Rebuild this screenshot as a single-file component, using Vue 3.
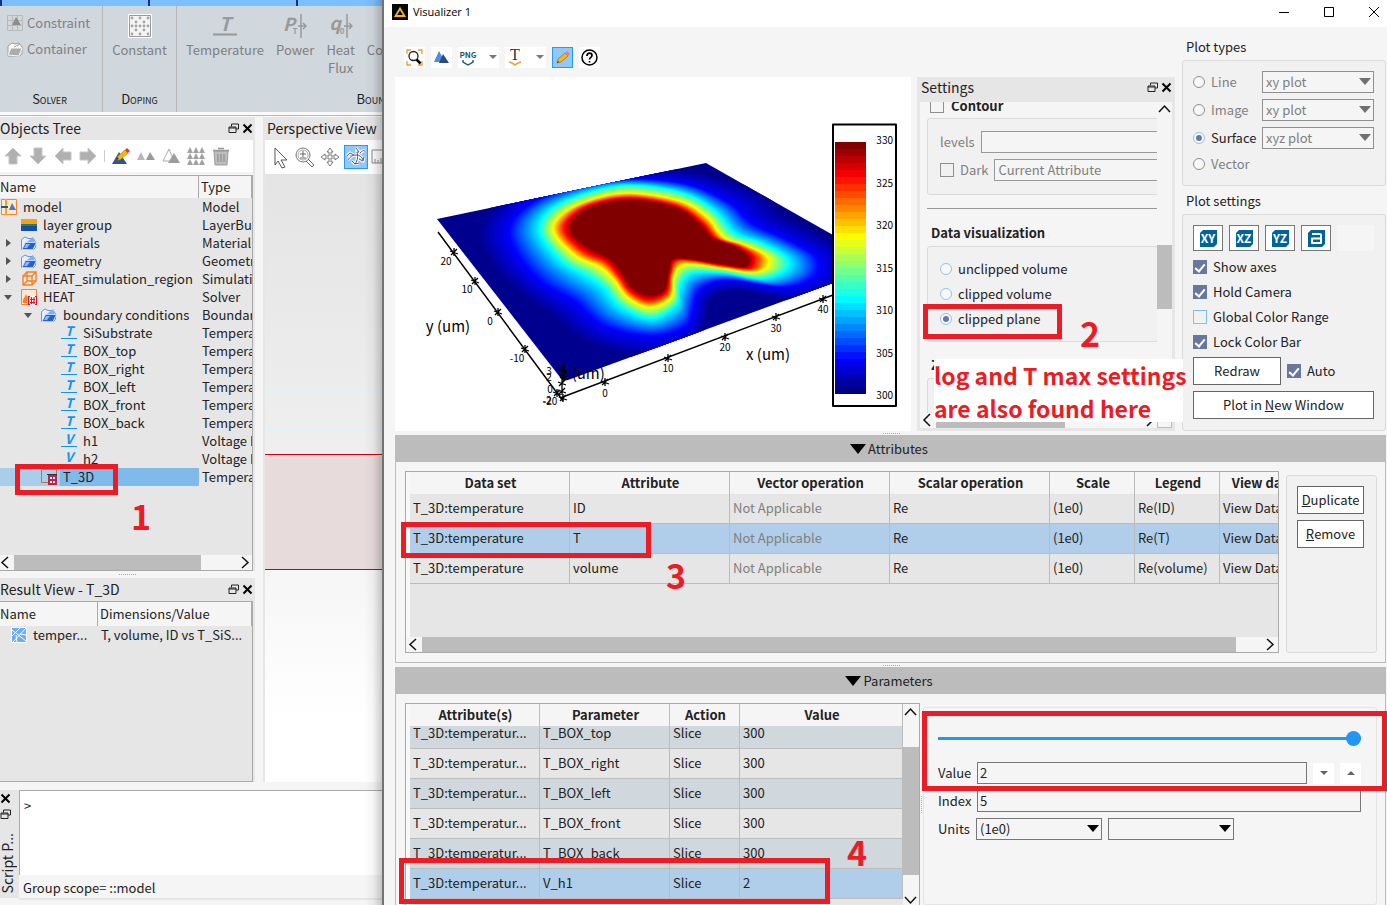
<template>
  <div class="desktop">
    <!-- simulation project window -->
    <section class="project">
      <div class="tabs"><i></i><i></i><i></i></div>
      <div class="ribbon">
        <div class="ribbon-group solver">
          <button class="small-tool">
            <svg width="16" height="16" viewBox="0 0 16 16">
              <path d="M.5.5h15v15H.5zM5.500 0v16M10.500 0v16M0 5.500h16M0 10.500h16" fill="none" stroke="#b9b9b9" />
              <path d="M9 2l5 8H5z" fill="#8c8c8c" />
            </svg>
            Constraint
          </button>
          <button class="small-tool">
            <svg width="16" height="16" viewBox="0 0 16 16">
              <path d="M1 5l4-3 3 1 4-1 3 4v7l-3 2H1z" fill="#f8f8f8" stroke="#9c9c9c" />
              <path d="M1 14l3-7h11l-3 8z" fill="#acacac" stroke="#f4f4f4" />
              <path d="M7 6l6-3" stroke="#a0a0a0" />
            </svg>
            Container
          </button>
          <span class="group-name">Solver</span>
        </div>
        <div class="ribbon-group doping">
          <button class="big-tool">
            <svg width="24" height="24" viewBox="0 0 24 24">
              <path d="M.5.5h23v23H.5z" fill="#f4f4f4" stroke="#fff" />
              <path d="M1.500 1.500h21v21h-21z" fill="none" stroke="#999" />
              <circle v-for="d in dopingDots" :key="d.id" :cx="d.x" :cy="d.y" r="1.400" fill="#a5a5a5" />
            </svg>
            Constant
          </button>
          <span class="group-name">Doping</span>
        </div>
        <div class="ribbon-group boundary">
          <div class="boundary-tools">
            <button class="big-tool temperature">
              <svg width="24" height="24" viewBox="0 0 24 24">
                <text x="12" y="17" class="glyph" font-size="19">T</text>
                <path d="M0 20.500h24" stroke="#999" stroke-width="2" />
              </svg>
              Temperature
            </button>
            <button class="big-tool">
              <svg width="24" height="24" viewBox="0 0 24 24">
                <text x="6" y="17" class="glyph" font-size="18">P</text>
                <text x="12" y="20" class="glyph-sub" font-size="8">T</text>
                <path d="M18 0v24M15 12h8M20 9l3 3-3 3" fill="none" stroke="#999" stroke-width="1.500" />
              </svg>
              Power
            </button>
            <button class="big-tool">
              <svg width="24" height="24" viewBox="0 0 24 24">
                <text x="6" y="16" class="glyph" font-size="18">q</text>
                <text x="13" y="20" class="glyph-sub" font-size="8">0</text>
                <path d="M18 0v24M15 12h8M20 9l3 3-3 3" fill="none" stroke="#999" stroke-width="1.500" />
              </svg>
              Heat<br />Flux
            </button>
            <button class="big-tool convection">Convection</button>
          </div>
          <span class="group-name">Boundary Conditions</span>
        </div>
      </div>
      <div class="ribbon-line"></div>

      <div class="workspace">
        <div class="docks">
          <div class="dock tree-dock">
            <header class="dock-title">
              <h2>Objects Tree</h2>
              <button class="dock-btn" aria-label="Float">
                <svg width="11" height="11" viewBox="0 0 11 11"><path d="M3.500 3.500V1h7v5H8M1 4h7v5.500H1zM1 5h7" fill="none" stroke="#222" /></svg>
              </button>
              <button class="dock-btn" aria-label="Close">
                <svg width="11" height="11" viewBox="0 0 11 11"><path d="M1.500 1.500l8 8M9.500 1.500l-8 8" stroke="#000" stroke-width="2" /></svg>
              </button>
            </header>
            <div class="tree-tools">
              <button v-for="r in [0, 180, 270, 90]" :key="r" aria-label="Move">
                <svg width="18" height="18" viewBox="0 0 18 18">
                  <path :transform="`rotate(${r} 9 9)`" d="M9 1l8 8h-4v8H5V9H1z" fill="#b0b0b0" stroke="#c6c6c6" />
                </svg>
              </button>
              <i class="tool-sep"></i>
              <button aria-label="Edit">
                <svg width="18" height="18" viewBox="0 0 18 18">
                  <path d="M7 5l8 12H0z" fill="#2d5596" />
                  <path d="M4 13l2-4 7-6 3 3-8 7z" fill="#f5b800" stroke="#a87800" stroke-width=".6" />
                  <path d="M13 3l2-2 3 3-2 2z" fill="#d6364a" />
                  <path d="M4 13l1-3 2 2z" fill="#333" />
                </svg>
              </button>
              <button aria-label="Pair">
                <svg width="18" height="18" viewBox="0 0 18 18"><path d="M0 13l4-8 4 8z" fill="#b8b8b8" /><path d="M9 13l4-8 5 8z" fill="#999" /></svg>
              </button>
              <button aria-label="Mirror">
                <svg width="18" height="18" viewBox="0 0 18 18"><path d="M1 14L7 2l5 12z" fill="#fff" stroke="#aaa" /><path d="M6 16l6-10 6 10z" fill="#9d9d9d" /></svg>
              </button>
              <button aria-label="Array">
                <svg width="18" height="18" viewBox="0 0 18 18">
                  <path v-for="n in 9" :key="n" :transform="`translate(${((n - 1) % 3) * 6} ${Math.floor((n - 1) / 3) * 6})`" d="M0 6l3-6 3 6z" fill="#a2a2a2" />
                </svg>
              </button>
              <button aria-label="Delete">
                <svg width="18" height="20" viewBox="0 0 18 20">
                  <path d="M2 5h14l-1 14H3z" fill="#bdbdbd" stroke="#9d9d9d" />
                  <path d="M1 4.500h16M6 2.500h6M6 8v8M9 8v8M12 8v8" stroke="#999" stroke-width="1.500" />
                </svg>
              </button>
            </div>
            <div class="tree-frame">
              <table class="tree">
                <colgroup><col class="tree-name" /><col /></colgroup>
                <thead><tr><th>Name</th><th>Type</th></tr></thead>
                <tbody>
                  <tr v-for="node in nodes" :key="node.name" :class="{ selected: node.selected }">
                    <td>
                      <div class="node" :class="'depth-' + node.depth">
                        <i class="arrow" :class="node.arrow"></i>
                        <svg class="node-icon" width="16" height="16" viewBox="0 0 16 16">
                          <g v-if="node.icon === 'model'">
                            <path d="M.5.5h15v15H.5z" fill="#fbe9d7" stroke="#f08a2c" />
                            <path d="M5 0v16" stroke="#f6a21b" stroke-width="2" />
                            <path d="M0 8h7" stroke="#135c8d" stroke-width="2" />
                            <path d="M8 11l3-7 4 7z" fill="#5577b5" />
                          </g>
                          <g v-else-if="node.icon === 'layer'">
                            <path d="M0 2h16v6H0z" fill="#f6a313" /><path d="M0 7h16v2H0z" fill="#287b70" /><path d="M0 9h16v5H0z" fill="#154fa3" />
                          </g>
                          <g v-else-if="node.icon === 'folder'">
                            <path d="M.5 4.500L4 2l3 1.500h5l2.500 3v6L12 14.500H.5z" fill="#e4f0ff" stroke="#6a94d4" />
                            <path d="M1 14.500L4.500 7.500h11L12 14.500z" fill="#2461cc" stroke="#cfe2fb" stroke-width=".8" />
                            <path d="M6 7l6-5 2 4-1 1z" fill="#7db0f2" />
                            <path d="M3 13l2-4h4l-3 4z" fill="#8ab8f4" />
                          </g>
                          <path v-else-if="node.icon === 'region'" d="M2 5h9v9H2zM6 1h9v9H6zM2 5l4-4M11 5l4-4M11 14l4-4M2 14l4-4" fill="none" stroke="#f5821f" stroke-width="1.400" />
                          <g v-else-if="node.icon === 'heat'">
                            <path d="M.5.5h15v15H.5z" fill="#fbe9d7" stroke="#f08a2c" />
                            <path d="M2 14c-1-4 2-5 3-9 2 3 2 6 1 9z" fill="#f5821f" />
                            <path d="M7 7h9v9H7z" fill="#fff" />
                            <path d="M9 7.500H7.500v8H9M14 7.500h1.500v8H14M9 10.500h5M9 13.500h5M10.500 8v7M13 8v7" fill="none" stroke="#e3122a" stroke-width="1.200" />
                          </g>
                          <g v-else-if="node.icon === 'monitor'">
                            <path d="M.5.5h15v13H.5z" fill="none" stroke="#bb7650" />
                            <path d="M7 6h9v10H7z" fill="#b32650" /><path d="M9 8h2v2H9zM12 8h2v2h-2zM9 12h2v2H9zM12 12h2v2h-2z" fill="#fff" />
                            <path d="M6 5.500h10" stroke="#333" />
                          </g>
                          <g v-else>
                            <text x="8" y="11" class="bc-glyph">{{ node.icon }}</text>
                            <path d="M0 13.500h16" stroke="#0a95f5" />
                          </g>
                        </svg>
                        <span>{{ node.name }}</span>
                      </div>
                    </td>
                    <td>{{ node.type }}</td>
                  </tr>
                </tbody>
              </table>
              <div class="hscroll">
                <svg width="14" height="15" viewBox="0 0 14 15"><path d="M8 2L2 7.500 8 13" class="chev" /></svg>
                <i class="tree-thumb"></i><b></b>
                <svg width="14" height="15" viewBox="0 0 14 15"><path d="M4 2l6 5.500L4 13" class="chev" /></svg>
              </div>
            </div>
            <div class="mark mark-1"></div>
            <span class="step step-1">1</span>
          </div>
          <div class="grip"></div>
          <div class="dock result-dock">
            <header class="dock-title">
              <h2>Result View - T_3D</h2>
              <button class="dock-btn" aria-label="Float">
                <svg width="11" height="11" viewBox="0 0 11 11"><path d="M3.500 3.500V1h7v5H8M1 4h7v5.500H1zM1 5h7" fill="none" stroke="#222" /></svg>
              </button>
              <button class="dock-btn" aria-label="Close">
                <svg width="11" height="11" viewBox="0 0 11 11"><path d="M1.500 1.500l8 8M9.500 1.500l-8 8" stroke="#000" stroke-width="2" /></svg>
              </button>
            </header>
            <div class="tree-frame">
              <table class="tree results">
                <colgroup><col class="result-name" /><col /></colgroup>
                <thead><tr><th>Name</th><th>Dimensions/Value</th></tr></thead>
                <tbody>
                  <tr>
                    <td>
                      <div class="node result-node">
                        <svg class="node-icon" width="16" height="16" viewBox="0 0 16 16">
                          <path d="M.5.5h15v15H.5z" fill="#6cacf3" stroke="#fff" />
                          <path d="M1 3l14 11M15 1L2 15M1 9l8-8M5 8l1 7M9 7l6 1" stroke="#fff" />
                        </svg>
                        <span>temper...</span>
                      </div>
                    </td>
                    <td>T, volume, ID vs T_SiS...</td>
                  </tr>
                </tbody>
              </table>
            </div>
          </div>
        </div>

        <div class="perspective">
          <header class="dock-title"><h2>Perspective View</h2></header>
          <div class="view-tools">
            <button aria-label="Select">
              <svg width="24" height="24" viewBox="0 0 24 24"><path d="M7 3l12 12h-6l4 7-3 1-4-7-3 4z" fill="#fff" stroke="#555" /></svg>
            </button>
            <button aria-label="Zoom">
              <svg width="24" height="24" viewBox="0 0 24 24"><circle cx="10" cy="10" r="7" fill="none" stroke="#777" /><circle cx="10" cy="10" r="5" fill="none" stroke="#aaa" /><path d="M15 14l6 6-2 2-6-6M7 9h6M10 6v6M7 13h6" fill="none" stroke="#666" /></svg>
            </button>
            <button aria-label="Pan">
              <svg width="24" height="24" viewBox="0 0 24 24"><path d="M12 3l3 4h-2v4h4V9l4 3-4 3v-2h-4v4h2l-3 4-3-4h2v-4H7v2l-4-3 4-3v2h4V7H9z" fill="#fff" stroke="#777" /></svg>
            </button>
            <button class="on" aria-label="Rotate">
              <svg width="22" height="22" viewBox="0 0 22 22"><path :d="rotateArrows" fill="none" stroke="#fff" stroke-width="3" /><path :d="rotateArrows" fill="none" stroke="#557" /></svg>
            </button>
            <button aria-label="Ruler">
              <svg width="24" height="24" viewBox="0 0 24 24"><path d="M3 5h20v13H3zM6 18v-4M9 18v-3M12 18v-5M15 18v-3" fill="#fff" stroke="#888" /></svg>
            </button>
          </div>
          <div class="viewport"><i class="guide"></i><i class="guide"></i><div class="slab"></div></div>
        </div>
      </div>

      <div class="script">
        <div class="script-side">
          <svg width="11" height="11" viewBox="0 0 11 11"><path d="M1.500 1.500l8 8M9.500 1.500l-8 8" stroke="#000" stroke-width="2" /></svg>
          <svg width="11" height="11" viewBox="0 0 11 11"><path d="M3.500 3.500V1h7v5H8M1 4h7v5.500H1zM1 5h7" fill="none" stroke="#222" /></svg>
          <span>Script P...</span>
        </div>
        <div class="script-main">
          <div class="console">&gt;</div>
          <div class="scope">Group scope= ::model</div>
        </div>
      </div>
    </section>

    <!-- visualizer window -->
    <section class="visualizer">
      <header class="titlebar">
        <svg width="16" height="16" viewBox="0 0 16 16"><path d="M0 0h16v16H0z" fill="#000" /><path d="M8 4.500l4.500 7.500h-9z" fill="none" stroke="#fcb415" stroke-width="1.800" /></svg>
        <h1>Visualizer 1</h1>
        <button aria-label="Minimize"><svg width="12" height="12" viewBox="0 0 12 12"><path d="M1 6.500h10" stroke="#000" /></svg></button>
        <button aria-label="Maximize"><svg width="12" height="12" viewBox="0 0 12 12"><path d="M1.500 1.500h9v9h-9z" fill="none" stroke="#000" /></svg></button>
        <button aria-label="Close"><svg width="12" height="12" viewBox="0 0 12 12"><path d="M1 1l10 10M11 1L1 11" stroke="#000" /></svg></button>
      </header>

      <div class="upper">
        <div class="upper-left">
          <div class="plot-tools">
            <button aria-label="Zoom extent">
              <svg width="17" height="17" viewBox="0 0 17 17"><path d="M1 5V1h4M12 1h4v4M16 12v4h-4M5 16H1v-4" fill="none" stroke="#f09a36" stroke-width="1.300" /><circle cx="7.500" cy="7" r="4.500" fill="none" stroke="#222" stroke-width="1.300" /><path d="M10.500 10.500l4 4" stroke="#000" stroke-width="2.500" /></svg>
            </button>
            <button aria-label="Surface">
              <svg width="17" height="17" viewBox="0 0 17 17"><path d="M1 13L6 2l6 11z" fill="#4f8ee0" /><path d="M6 14l4-9 6 9z" fill="#2b4b7e" /></svg>
            </button>
            <button class="wide" aria-label="Export image">
              <svg width="17" height="17" viewBox="0 0 17 17"><text x="8" y="9" class="png-glyph">PNG</text><path d="M3 11v2l5 3 5-3v-2" fill="none" stroke="#14597c" stroke-width="1.400" /></svg>
              <i></i>
            </button>
            <button class="wide" aria-label="Export text">
              <svg width="17" height="17" viewBox="0 0 17 17"><text x="8" y="11" class="txt-glyph">T</text><path d="M2 13l3 1 3 2 3-2 3-1" fill="none" stroke="#f2a23a" stroke-width="1.600" /></svg>
              <i></i>
            </button>
            <button class="on" aria-label="Edit">
              <svg width="17" height="17" viewBox="0 0 17 17"><path d="M3 14l1-4 7-6 3 3-7 6z" fill="#f3b61f" stroke="#9b7413" stroke-width=".7" /><path d="M11 4l2-2 3 3-2 2z" fill="#f07a88" /><path d="M3 14l1-2 1 1z" fill="#222" /></svg>
            </button>
            <button aria-label="Help">
              <svg width="17" height="17" viewBox="0 0 17 17"><circle cx="8.500" cy="8.500" r="7.500" fill="none" stroke="#000" stroke-width="1.500" /><path d="M6 7c0-4 5-3.500 5-.500 0 2-2.500 1.800-2.500 4M8.500 12v1.500" fill="none" stroke="#000" stroke-width="1.700" /></svg>
            </button>
          </div>
          <div class="plot-row">
            <div class="plot">
              <svg width="516" height="354" viewBox="395 77 516 354">
                <clipPath id="plane"><path :d="planePath" /></clipPath>
                <path :d="planePath" fill="#00008f" />
                <g clip-path="url(#plane)">
                  <path v-for="c in contours" :key="c.level" :d="c.path" :fill="c.color" />
                </g>
                <path d="M438 232L563 401M560 398L833 295" fill="none" stroke="#000" stroke-width="1.500" />
                <path v-for="t in ticks" :key="t.id" :d="`M${t.x - 4} ${t.y - 1}l8 3M${t.x - 3} ${t.y + 3}l6-6M${t.x} ${t.y - 4}v8`" stroke="#000" stroke-width="1.300" />
                <text v-for="t in tickLabels" :key="t.id" :x="t.x" :y="t.y" class="tick">{{ t.text }}</text>
                <text x="448" y="332" class="axis">y (um)</text>
                <text x="768" y="360" class="axis">x (um)</text>
                <text x="583" y="379" class="axis">z (um)</text>
                <g class="color-bar">
                  <path d="M833 124.500h63V406h-63z" fill="#fff" stroke="#000" stroke-width="2" stroke-linejoin="round" />
                  <rect v-for="b in bands" :key="b.y" x="835" :y="b.y" width="31" height="7" :fill="b.color" />
                  <text v-for="(v, i) in barValues" :key="v" x="893" :y="144 + Math.round(i * 42.500)" class="bar-tick">{{ v }}</text>
                </g>
              </svg>
            </div>
            <div class="settings">
              <header class="dock-title">
                <h2>Settings</h2>
                <button class="dock-btn" aria-label="Float">
                  <svg width="11" height="11" viewBox="0 0 11 11"><path d="M3.500 3.500V1h7v5H8M1 4h7v5.500H1zM1 5h7" fill="none" stroke="#222" /></svg>
                </button>
                <button class="dock-btn" aria-label="Close">
                  <svg width="11" height="11" viewBox="0 0 11 11"><path d="M1.500 1.500l8 8M9.500 1.500l-8 8" stroke="#000" stroke-width="2" /></svg>
                </button>
              </header>
              <div class="settings-body">
                <div class="settings-scroll">
                  <label class="contour"><input v-model="contour" type="checkbox" />Contour</label>
                  <div class="box contour-box">
                    <label class="row">levels <input v-model="levels" type="text" /></label>
                    <div class="row">
                      <label><input v-model="dark" type="checkbox" />Dark</label>
                      <select aria-label="Contour attribute"><option>Current Attribute</option></select>
                    </div>
                  </div>
                  <hr />
                  <h3>Data visualization</h3>
                  <div class="box clip-box">
                    <label v-for="m in clipModes" :key="m"><input v-model="clipMode" type="radio" name="clip" :value="m" />{{ m }}</label>
                  </div>
                  <h3 class="z-title">Z</h3>
                  <div class="box rest-box"></div>
                </div>
                <div class="settings-v">
                  <svg width="15" height="12" viewBox="0 0 15 12"><path d="M2 10l5.500-6L13 10" class="chev" /></svg>
                  <i></i>
                </div>
                <div class="settings-h">
                  <svg width="14" height="15" viewBox="0 0 14 15"><path d="M10 1L4 7l6 6" class="chev" /></svg>
                  <i></i>
                  <svg width="14" height="15" viewBox="0 0 14 15"><path d="M4 1l6 6-6 6" class="chev" /></svg>
                </div>
                <div class="corner"></div>
              </div>
              <div class="mark mark-2"></div>
              <span class="step step-2">2</span>
              <p class="note">log and T max settings<br />are also found here</p>
            </div>
          </div>
        </div>

        <aside class="side">
          <h3>Plot types</h3>
          <div class="box types">
            <div v-for="p in plotTypes" :key="p.name" class="type-row" :class="{ off: !p.active }">
              <label><input v-model="plotType" type="radio" name="type" :value="p.name" :disabled="!p.active" />{{ p.name }}</label>
              <span v-if="p.kind" class="select"><select :aria-label="p.name + ' kind'"><option>{{ p.kind }}</option></select></span>
            </div>
          </div>
          <h3>Plot settings</h3>
          <div class="box plot-settings">
            <div class="planes">
              <button v-for="p in ['XY', 'XZ', 'YZ', 'a']" :key="p" :aria-label="p">
                <svg width="17" height="17" viewBox="0 0 17 17">
                  <path d="M3 0h14v14l-3 3H0V3z" fill="#00649a" />
                  <path v-if="p === 'a'" d="M4 4h8q1 0 1 1v8H4V8.500h9" fill="none" stroke="#fff" stroke-width="2" stroke-linejoin="round" />
                  <text v-else x="8" y="13" class="plane-glyph">{{ p }}</text>
                </svg>
              </button>
              <i></i>
            </div>
            <label v-for="o in options" :key="o.name" class="option"><input v-model="o.on" type="checkbox" />{{ o.name }}</label>
            <div class="redraw">
              <button class="btn">Redraw</button>
              <label><input v-model="auto" type="checkbox" />Auto</label>
            </div>
            <button class="btn">Plot in&nbsp;<u>N</u>ew Window</button>
          </div>
        </aside>
      </div>

      <div class="grip"></div>
      <button class="section-head"><i></i>Attributes</button>
      <div class="section attributes">
        <div class="attr-frame">
          <div class="attr-clip">
            <table class="grid">
              <colgroup><col v-for="(w, i) in ['w160', 'w160', 'w160', 'w160', 'w85', 'w85', 'w85']" :key="i" :class="w" /></colgroup>
              <thead><tr><th v-for="h in attributeHeads" :key="h">{{ h }}</th></tr></thead>
              <tbody>
                <tr v-for="a in attributes" :key="a" :class="{ selected: a === 'T' }">
                  <td>T_3D:temperature</td><td>{{ a }}</td><td class="na">Not Applicable</td><td>Re</td><td>(1e0)</td><td>Re({{ a }})</td><td>View Data</td>
                </tr>
              </tbody>
            </table>
          </div>
          <div class="hscroll">
            <svg width="16" height="15" viewBox="0 0 16 15"><path d="M10 2L4 7.500l6 5.500" class="chev" /></svg>
            <i class="attr-thumb"></i><b></b>
            <svg width="15" height="15" viewBox="0 0 15 15"><path d="M4 2l6 5.500L4 13" class="chev" /></svg>
          </div>
        </div>
        <div class="box attr-actions">
          <button class="btn"><u>D</u>uplicate</button>
          <button class="btn"><u>R</u>emove</button>
        </div>
        <div class="mark mark-3"></div>
        <span class="step step-3">3</span>
      </div>

      <div class="grip"></div>
      <button class="section-head"><i></i>Parameters</button>
      <div class="section parameters">
        <div class="param-frame">
          <div class="param-clip">
            <table class="grid">
              <colgroup><col class="w130" /><col class="w130" /><col class="w70" /><col /></colgroup>
              <thead><tr><th>Attribute(s)</th><th>Parameter</th><th>Action</th><th>Value</th></tr></thead>
              <tbody>
                <tr v-for="(p, i) in parameters" :key="p" :class="{ cut: i === 0, alt: i % 2 === 0, selected: p === 'V_h1' }">
                  <td>T_3D:temperatur...</td><td>{{ p }}</td><td>Slice</td><td>{{ p === 'V_h1' ? value : 300 }}</td>
                </tr>
              </tbody>
            </table>
          </div>
          <div class="vscroll">
            <svg width="15" height="16" viewBox="0 0 15 16"><path d="M2 11l5.500-6L13 11" class="chev" /></svg>
            <i></i>
            <svg width="15" height="12" viewBox="0 0 15 12"><path d="M2 4l5.500 6L13 4" class="chev" /></svg>
          </div>
        </div>
        <i class="vgrip"></i>
        <div class="box param-form">
          <input v-model="index" class="slider" type="range" min="0" max="5" aria-label="Slice position" />
          <div class="form-row">
            <label for="value">Value</label>
            <input id="value" v-model="value" type="text" />
            <button aria-label="Down"><i class="down"></i></button>
            <button aria-label="Up"><i class="up"></i></button>
          </div>
          <div class="form-row">
            <label for="index">Index</label>
            <input id="index" v-model="index" type="text" />
          </div>
          <div class="form-row units">
            <label for="units">Units</label>
            <span class="select"><select id="units"><option>(1e0)</option></select></span>
            <span class="select"><select aria-label="Unit name"><option></option></select></span>
          </div>
        </div>
        <div class="mark mark-4"></div>
        <span class="step step-4">4</span>
        <div class="mark mark-5"></div>
      </div>
    </section>
  </div>
</template>

<script setup>
import { ref } from 'vue'

const nodes = [
  { name: 'model', type: 'Model', depth: 0, icon: 'model' },
  { name: 'layer group', type: 'LayerBuilder', depth: 1, icon: 'layer' },
  { name: 'materials', type: 'Material', depth: 1, icon: 'folder', arrow: 'closed' },
  { name: 'geometry', type: 'Geometry', depth: 1, icon: 'folder', arrow: 'closed' },
  { name: 'HEAT_simulation_region', type: 'Simulation', depth: 1, icon: 'region', arrow: 'closed' },
  { name: 'HEAT', type: 'Solver', depth: 1, icon: 'heat', arrow: 'open' },
  { name: 'boundary conditions', type: 'Boundary', depth: 2, icon: 'folder', arrow: 'open' },
  { name: 'SiSubstrate', type: 'Temperature', depth: 3, icon: 'T' },
  { name: 'BOX_top', type: 'Temperature', depth: 3, icon: 'T' },
  { name: 'BOX_right', type: 'Temperature', depth: 3, icon: 'T' },
  { name: 'BOX_left', type: 'Temperature', depth: 3, icon: 'T' },
  { name: 'BOX_front', type: 'Temperature', depth: 3, icon: 'T' },
  { name: 'BOX_back', type: 'Temperature', depth: 3, icon: 'T' },
  { name: 'h1', type: 'Voltage BC', depth: 3, icon: 'V' },
  { name: 'h2', type: 'Voltage BC', depth: 3, icon: 'V' },
  { name: 'T_3D', type: 'Temperature', depth: 2, icon: 'monitor', selected: true }
]

const attributeHeads = ['Data set', 'Attribute', 'Vector operation', 'Scalar operation', 'Scale', 'Legend', 'View data']
const attributes = ['ID', 'T', 'volume']
const parameters = ['T_BOX_top', 'T_BOX_right', 'T_BOX_left', 'T_BOX_front', 'T_BOX_back', 'V_h1']

const contour = ref(false)
const dark = ref(false)
const levels = ref('')
const clipModes = ['unclipped volume', 'clipped volume', 'clipped plane']
const clipMode = ref('clipped plane')
const plotTypes = [
  { name: 'Line', kind: 'xy plot' },
  { name: 'Image', kind: 'xy plot' },
  { name: 'Surface', kind: 'xyz plot', active: true },
  { name: 'Vector' }
]
const plotType = ref('Surface')
const options = ref([
  { name: 'Show axes', on: true },
  { name: 'Hold Camera', on: true },
  { name: 'Global Color Range', on: false },
  { name: 'Lock Color Bar', on: true }
])
const auto = ref(true)
const value = ref('2')
const index = ref('5')

const rotateArrows = 'M11 2l3 4h-2c1 4 1 8-2 12M10 18l-3-3M10 18l4-1M11 9c4 0 6 2 7 5M19 11l-1 4-4-2M11 9C7 9 5 11 3 14M2 10l3-3 4 2M15 7c2-2 3-3 5-2'

const dopingDots = []
for (let r = 0; r < 5; r++) {
  for (let c = 0; c < 5; c++) {
    if ((r + c) % 2 === 0 || r === 2) {
      dopingDots.push({ id: r * 5 + c, x: 4 + c * 4, y: 4 + r * 4 })
    }
  }
}

// jet colour map, t from 0 to 1
function jet(t) {
  const ch = (c) => Math.round(255 * Math.max(0, Math.min(1, 1.5 - Math.abs(4 * t - c))))
  return `rgb(${ch(3)}, ${ch(2)}, ${ch(1)})`
}

const bandCount = 36
const bands = Array.from({ length: bandCount }, (_, i) => ({
  y: 142 + i * 7,
  color: jet(1 - i / (bandCount - 1))
}))
const barValues = [330, 325, 320, 315, 310, 305, 300]

const planePath = 'M437 219L706 163L833 235V283L568 380L563 381Z'

// key isotherms, outermost first; all have the same number of points
const isotherms = [
  { t: 0.01, points: [[628, 168], [696, 171], [760, 190], [790, 215], [822, 232], [853, 255], [848, 285], [800, 302], [740, 292], [712, 302], [708, 324], [695, 345], [652, 360], [590, 347], [548, 318], [515, 292], [490, 267], [475, 232], [502, 196], [560, 178]] },
  { t: 0.13, points: [[628, 179], [687, 184], [730, 203], [752, 223], [788, 240], [816, 257], [815, 276], [785, 287], [728, 280], [700, 290], [693, 310], [685, 327], [652, 336], [604, 326], [572, 300], [542, 283], [520, 259], [509, 230], [528, 205], [569, 188]] },
  { t: 0.38, points: [[628, 185], [683, 193], [715, 211], [735, 233], [762, 243], [786, 257], [786, 270], [762, 279], [722, 273], [691, 274], [680, 288], [677, 305], [652, 319], [621, 307], [603, 287], [585, 275], [562, 262], [540, 233], [549, 211], [580, 195]] },
  { t: 0.63, points: [[628, 193], [680, 201], [707, 217], [723, 237], [745, 245], [767, 256], [766, 268], [750, 272], [723, 268], [686, 264], [674, 275], [671, 297], [650, 307], [628, 298], [614, 280], [600, 267], [576, 256], [554, 233], [560, 216], [587, 201]] },
  { t: 0.85, points: [[630, 197], [677, 205], [703, 222], [717, 238], [739, 246], [755, 256], [754, 267], [745, 269], [723, 266], [680, 260], [671, 273], [667, 293], [649, 301], [630, 292], [618, 276], [605, 262], [583, 252], [564, 233], [568, 218], [590, 204]] },
  { t: 1, points: [[631, 200], [676, 208], [700, 225], [712, 238], [735, 247], [748, 257], [746, 266], [735, 266], [718, 263], [676, 258], [669, 270], [664, 290], [649, 295], [632, 287], [622, 272], [611, 259], [590, 248], [573, 234], [574, 220], [593, 207]] }
]

// closed Catmull-Rom curve through the points
function smooth(pts) {
  const n = pts.length
  let d = `M${pts[0][0]} ${pts[0][1]}`
  for (let i = 0; i < n; i++) {
    const p0 = pts[(i + n - 1) % n]
    const p1 = pts[i]
    const p2 = pts[(i + 1) % n]
    const p3 = pts[(i + 2) % n]
    const c = [0, 1].map(k => p1[k] + (p2[k] - p0[k]) / 6)
    const e = [0, 1].map(k => p2[k] - (p3[k] - p1[k]) / 6)
    d += `C${c.map(v => v.toFixed(1))} ${e.map(v => v.toFixed(1))} ${p2.map(v => v.toFixed(1))}`
  }
  return d + 'Z'
}

const contours = []
const steps = 64
for (let i = 1; i <= steps; i++) {
  const t = i / steps
  const k = Math.max(1, isotherms.findIndex(s => s.t >= t))
  const a = isotherms[k - 1]
  const b = isotherms[k]
  const f = (t - a.t) / (b.t - a.t)
  const pts = a.points.map((p, j) => [0, 1].map(m => p[m] + (b.points[j][m] - p[m]) * f))
  contours.push({ level: i, path: smooth(pts), color: jet(t) })
}

const ticks = [
  [454, 252], [475, 281], [498, 312], [525, 349], [605, 382], [668, 358], [725, 337], [776, 317], [823, 299],
  [562, 368], [563, 375], [562, 383], [562, 391], [563, 398], [557, 393]
].map(([x, y], id) => ({ id, x, y }))

// the z labels crowd together at the front corner
const tickLabels = [
  ['20', 446, 265], ['10', 467, 293], ['0', 490, 325], ['-10', 517, 362],
  ['0', 605, 397], ['10', 668, 372], ['20', 725, 351], ['30', 776, 332], ['40', 823, 313],
  ['3', 549, 375], ['2', 549, 381], ['0', 550, 393], ['-2', 547, 404], ['-20', 550, 405]
].map(([text, x, y], id) => ({ id, text, x, y }))
</script>

<style>
body {
  background: #f5f5f5;
}
</style>

<style scoped>
* {
  box-sizing: border-box;
}

.desktop {
  display: flex;
  height: 100vh;
  overflow: hidden;
  background: #f5f5f5;
  color: #222;
  font-family: "Noto Sans CJK SC", "Noto Sans", sans-serif;
  font-size: 13px;
  line-height: 18px;
}

button, input, select {
  margin: 0;
  padding: 0;
  border: 0;
  background: none;
  color: inherit;
  font: inherit;
}

h1, h2, h3, p {
  margin: 0;
  font-size: 13px;
  font-weight: 400;
}

svg {
  display: block;
  flex: none;
}

label {
  display: flex;
  align-items: center;
}

.chev {
  fill: none;
  stroke: #111;
  stroke-width: 1.5;
}

/* project window */
.project {
  position: relative;
  display: flex;
  flex-direction: column;
  flex: none;
  width: 384px;
  overflow: hidden;
}

.project::after {
  content: "";
  position: absolute;
  inset: 0 0 0 auto;
  width: 18px;
  border-right: 2px solid #737373;
  background: linear-gradient(90deg, transparent, rgba(0, 0, 0, 0.04) 50%, rgba(0, 0, 0, 0.2));
  pointer-events: none;
}

.tabs {
  display: flex;
  flex: none;
  height: 6px;
  background: #7bbfff;
}

.tabs i {
  flex: none;
  width: 148px;
  border-left: 2px solid #1b2f8c;
}

.ribbon {
  display: flex;
  flex: none;
  height: 106px;
  background: #d0d7dd;
  color: #808080;
}

.ribbon-group {
  display: flex;
  flex-direction: column;
  flex: none;
  padding-top: 8px;
  border-right: 1px solid #b5b5b5;
}

.solver {
  width: 103px;
  padding-left: 7px;
  gap: 8px;
}

.doping {
  width: 74px;
}

.boundary {
  width: 470px;
}

.group-name {
  margin-top: auto;
  padding-bottom: 4px;
  color: #222;
  font-variant: small-caps;
  text-align: center;
}

.solver .group-name {
  padding-right: 10px;
}

.small-tool {
  display: flex;
  align-items: center;
  gap: 4px;
}

.big-tool {
  display: flex;
  flex-direction: column;
  align-items: center;
  gap: 3px;
}

.boundary-tools {
  display: flex;
  align-items: flex-start;
  gap: 12px;
  padding-left: 9px;
}

.convection {
  padding-top: 27px;
}

.glyph, .glyph-sub {
  fill: #999;
  font-weight: 700;
  text-anchor: middle;
}

.glyph {
  font-style: italic;
}

.ribbon-line {
  flex: none;
  height: 5px;
  border-top: 3px solid #fafafa;
  border-bottom: 1px solid #f5f5f5;
  background: #b8b8b8;
}

.workspace {
  display: flex;
  flex: 1;
  min-height: 0;
  margin-bottom: 8px;
  gap: 8px;
}

.docks {
  display: flex;
  flex-direction: column;
  flex: none;
  width: 255px;
}

.dock {
  position: relative;
  display: flex;
  flex-direction: column;
  padding-right: 2px;
  background: #e6e6e6;
}

.tree-dock {
  flex: 1;
  min-height: 0;
}

.result-dock {
  flex: none;
  height: 204px;
}

.dock-title {
  display: flex;
  align-items: center;
  flex: none;
  height: 23px;
  gap: 3px;
  background: #e6e6e6;
}

.dock-title h2 {
  flex: 1;
  padding-bottom: 2px;
  font-size: 14px;
  line-height: 20px;
  white-space: nowrap;
}

.dock-btn {
  width: 11px;
  height: 11px;
}

.tree-tools {
  display: flex;
  align-items: center;
  flex: none;
  height: 32px;
  padding-left: 4px;
  gap: 7px;
  background: #fff;
}

.tool-sep {
  width: 1px;
  height: 12px;
  background: #ccc;
}

.tree-frame {
  display: flex;
  flex-direction: column;
  flex: 1;
  min-height: 0;
  border: solid #aaa;
  border-width: 1px 1px 1px 0;
  overflow: hidden;
}

.tree-tools + .tree-frame {
  margin-top: 3px;
  box-shadow: 0 -3px 0 #f5f5f5;
}

.tree {
  width: 100%;
  border-spacing: 0;
  table-layout: fixed;
}

.tree-name {
  width: 199px;
}

.result-name {
  width: 98px;
}

.tree th {
  height: 22px;
  padding: 0 0 0 2px;
  border-right: 1px solid #aaa;
  background: #f5f5f5;
  font-weight: 400;
  text-align: left;
}

.tree th:first-child {
  padding-left: 0;
}

.results th {
  height: 24px;
}

.tree td {
  height: 18px;
  padding: 0;
  overflow: hidden;
  white-space: nowrap;
}

.tree td + td {
  padding-left: 3px;
}

.tree .selected td:first-child {
  background: linear-gradient(90deg, #aacde9 60px, #80baeb 60px);
}

.node {
  display: flex;
  align-items: center;
  height: 18px;
}

.node-icon {
  margin: 0 6px 0 1px;
}

.bc-glyph {
  fill: #0a95f5;
  font-size: 13px;
  font-style: italic;
  font-weight: 700;
  text-anchor: middle;
}

.depth-2 {
  padding-left: 20px;
}

.depth-3 {
  padding-left: 40px;
}

.result-node {
  padding-left: 10px;
}

.arrow {
  display: flex;
  justify-content: center;
  width: 20px;
  padding-right: 4px;
}

.depth-0 .arrow {
  display: none;
}

.arrow.closed::before {
  content: "";
  border: 4px solid transparent;
  border-left: 5px solid #555;
  border-right: 0;
}

.arrow.open::before {
  content: "";
  border: 4px solid transparent;
  border-top: 5px solid #555;
  border-bottom: 0;
}

.hscroll {
  display: flex;
  flex: none;
  height: 15px;
  margin-top: auto;
  background: #f5f5f5;
}

.hscroll i {
  background: #bcbcbc;
}

.hscroll b {
  flex: 1;
}

.tree-thumb {
  width: 187px;
}

.grip {
  display: flex;
  justify-content: center;
  align-items: center;
  flex: none;
  height: 7px;
}

.grip::before {
  content: "";
  width: 17px;
  border-top: 1px dotted #aaa;
}

.perspective {
  display: flex;
  flex-direction: column;
  flex: none;
  width: 300px;
  padding-left: 2px;
  background: #e6e6e6;
}

.perspective h2 {
  padding-left: 2px;
}

.view-tools {
  display: flex;
  align-items: center;
  flex: none;
  height: 34px;
  padding-left: 3px;
  gap: 1px;
  background: #fff;
}

.view-tools .on {
  margin-left: 1px;
  border: 1px solid #2b98f5;
  background: #8fc8fa;
}

.viewport {
  flex: 1;
  padding-top: 216px;
  background: linear-gradient(#e4e4e4, #f0f0f0 50%, #fff 90%);
}

.guide {
  display: block;
  height: 40px;
  border-top: 1px solid #dff0f8;
}

.guide + .guide {
  height: 24px;
}

.slab {
  height: 116px;
  border: solid #d00010;
  border-width: 1px 0;
  background: #e7dbdb;
}

.script {
  display: flex;
  flex: none;
  height: 115px;
}

.script-side {
  display: flex;
  flex-direction: column;
  flex: none;
  width: 19px;
  height: 108px;
  padding-top: 3px;
  gap: 5px;
  background: #e6e6e6;
}

.script-side span {
  margin: 8px 2px 0 0;
  font-size: 14px;
  line-height: 14px;
  white-space: nowrap;
  writing-mode: vertical-rl;
  transform: rotate(180deg);
}

.script-main {
  display: flex;
  flex-direction: column;
  flex: 1;
  height: 110px;
  border-bottom: 2px solid #e6e6e6;
}

.console {
  height: 87px;
  padding: 6px 4px;
  border: solid #aaa;
  border-width: 1px 0 0 1px;
  background: #fff;
}

.scope {
  padding: 3px 4px 0;
  line-height: 20px;
}

/* visualizer window */
.visualizer {
  display: flex;
  flex-direction: column;
  flex: 1;
  min-width: 0;
  padding-left: 11px;
  overflow: hidden;
}

.titlebar {
  display: flex;
  align-items: center;
  flex: none;
  height: 27px;
  margin-left: -11px;
  padding: 0 7px 4px 8px;
  background: #fff;
  gap: 5px;
}

.titlebar h1 {
  flex: 1;
  color: #000;
  font-family: "Open Sans", "Noto Sans", sans-serif;
  font-size: 11px;
}

.titlebar button + button {
  margin-left: 28px;
}

.upper {
  display: flex;
  flex: none;
  height: 404px;
  gap: 7px;
}

.upper-left {
  display: flex;
  flex-direction: column;
  flex: 1;
  min-width: 0;
}

.plot-tools {
  display: flex;
  align-items: center;
  flex: none;
  height: 50px;
  padding: 10px 0 0 9px;
  gap: 6px;
}

.plot-tools button {
  display: flex;
  align-items: center;
  justify-content: center;
  width: 21px;
  height: 21px;
  background: #fff;
}

.plot-tools .wide {
  justify-content: space-between;
  width: 41px;
  padding: 0 2px;
}

.plot-tools i {
  border: 4px solid transparent;
  border-top-color: #777;
  border-bottom: 0;
}

.plot-tools .on {
  border: 1px solid #2b98f5;
  background: #8fc8fa;
}

.png-glyph {
  fill: #14597c;
  font-size: 8px;
  font-weight: 700;
  text-anchor: middle;
}

.txt-glyph {
  fill: #333;
  font-family: "Liberation Serif", serif;
  font-size: 16px;
  text-anchor: middle;
}

.plot-row {
  display: flex;
  flex: 1;
  gap: 6px;
}

.plot {
  flex: 1;
  background: #fff;
  overflow: hidden;
}

.tick {
  font-size: 10px;
  text-anchor: middle;
}

.bar-tick {
  font-size: 10px;
  text-anchor: end;
}

.axis {
  font-size: 15px;
  text-anchor: middle;
}

.settings {
  position: relative;
  flex: none;
  width: 258px;
  padding: 0 3px 3px;
  background: #e6e6e6;
}

.settings .dock-title {
  height: 25px;
  padding-bottom: 4px;
}

.settings .dock-title h2 {
  padding-left: 1px;
}

.settings-body {
  display: grid;
  grid-template-columns: 1fr 15px;
  grid-template-rows: 1fr 15px;
  height: 326px;
  background: #f5f5f5;
}

.settings-scroll {
  display: flex;
  flex-direction: column;
  min-width: 0;
  height: 311px;
  padding-left: 7px;
  overflow: hidden;
}

.contour {
  flex: none;
  height: 20px;
  margin-top: -6px;
  padding-left: 3px;
  font-weight: 700;
  gap: 7px;
}

.box {
  border: 1px solid #dadada;
  border-radius: 3px;
  background: #f1f1f1;
}

.settings-scroll .box {
  flex: none;
  margin-right: -4px;
}

.contour-box {
  display: flex;
  flex-direction: column;
  height: 77px;
  margin-top: 2px;
  padding: 12px 0 0 12px;
  color: #808080;
  gap: 6px;
}

.row {
  display: flex;
  align-items: center;
  gap: 6px;
}

.row label {
  gap: 6px;
}

.row > input, .row select {
  flex: 1;
  width: 60px;
  height: 22px;
  padding-left: 3px;
  border: 1px solid #999;
  background: #f5f5f5;
  appearance: none;
}

hr {
  flex: none;
  width: 100%;
  height: 1px;
  margin: 13px 0 15px;
  border: 0;
  background: #999;
}

.settings-scroll h3 {
  flex: none;
  padding-left: 4px;
  font-weight: 700;
}

.clip-box {
  display: flex;
  flex-direction: column;
  height: 96px;
  margin-top: 4px;
  padding: 13px 0 0 12px;
  gap: 7px;
}

.clip-box label {
  gap: 6px;
}

.settings-scroll .z-title {
  margin-top: 14px;
}

.rest-box {
  height: 50px;
  margin-top: 4px;
}

.settings-v {
  display: flex;
  flex-direction: column;
}

.settings-v i {
  height: 64px;
  margin-top: 131px;
  background: #bcbcbc;
}

.settings-h {
  display: flex;
}

.settings-h i {
  width: 129px;
  margin: 0 auto 0 2px;
  background: #bcbcbc;
}

.corner {
  border: 1px solid #bcbcbc;
}

input[type="checkbox"] {
  display: grid;
  place-items: center;
  width: 14px;
  height: 14px;
  border: 1px solid #8f8f8f;
  appearance: none;
}

input[type="radio"] {
  display: grid;
  place-items: center;
  width: 12px;
  height: 12px;
  border: 1px solid #90c4ee;
  border-radius: 50%;
  background: #f8f8f8;
  appearance: none;
}

input[type="radio"]:disabled {
  border-color: #8f8f8f;
}

input[type="radio"]:checked::before {
  content: "";
  width: 6px;
  height: 6px;
  border-radius: 50%;
  background: #68789c;
}

.side {
  flex: none;
  width: 205px;
  padding: 11px 1px 0 0;
}

.side h3 {
  padding-left: 4px;
}

.types {
  display: flex;
  flex-direction: column;
  height: 126px;
  margin: 4px 0 6px;
  padding: 10px 11px 10px 10px;
  gap: 6px;
}

.type-row {
  display: flex;
  justify-content: space-between;
  height: 22px;
}

.type-row label {
  gap: 6px;
}

.type-row:last-child {
  height: 18px;
}

.type-row.off {
  color: #808080;
}

.select {
  position: relative;
  width: 112px;
}

.select::after {
  content: "";
  position: absolute;
  top: 7px;
  right: 3px;
  border: 6px solid transparent;
  border-top: 7px solid #707070;
  border-bottom: 0;
  pointer-events: none;
}

.select select {
  display: block;
  width: 100%;
  height: 22px;
  padding-left: 3px;
  border: 1px solid #8f8f8f;
  background: #f5f5f5;
  color: #808080;
  appearance: none;
}

.plot-settings {
  display: flex;
  flex-direction: column;
  height: 217px;
  margin-top: 4px;
  padding: 10px 11px 10px 10px;
}

.planes {
  display: flex;
  margin-bottom: 3px;
  gap: 6px;
}

.planes button {
  display: grid;
  place-items: center;
  width: 30px;
  height: 26px;
  border: 1px solid #777;
  background: #fff;
}

.planes i {
  flex: 1;
  background: #f5f5f5;
}

.plane-glyph {
  fill: #fff;
  font-size: 12px;
  font-weight: 700;
  text-anchor: middle;
}

.option {
  height: 25px;
}

.option, .redraw label {
  gap: 6px;
}

.side input[type="checkbox"], .settings-scroll input[type="checkbox"] {
  flex: none;
}

.side input[type="checkbox"] {
  border-color: #7cc0f8;
}

.side input[type="checkbox"]:checked {
  border-color: #68789c;
  background: #68789c;
}

.side input[type="checkbox"]:checked::before {
  content: "";
  width: 4px;
  height: 8px;
  border: solid #fff;
  border-width: 0 2px 2px 0;
  transform: rotate(40deg);
}

.redraw {
  display: flex;
  margin: 3px 0 6px;
  gap: 6px;
}

.redraw .btn {
  width: 88px;
}

.btn {
  display: flex;
  align-items: center;
  justify-content: center;
  flex: none;
  height: 28px;
  border: 1px solid #666;
  background: #fff;
  white-space: nowrap;
}

.upper + .grip {
  height: 4px;
}

.section-head {
  display: flex;
  align-items: center;
  justify-content: center;
  flex: none;
  height: 27px;
  margin-right: 1px;
  padding-right: 3px;
  background: #bcbcbc;
  gap: 2px;
}

.section-head i {
  border: 8px solid transparent;
  border-top: 10px solid #000;
  border-bottom: 0;
}

.section {
  position: relative;
  display: flex;
  margin-right: 1px;
  padding: 9px 8px 9px 9px;
  border: 1px solid #bcbcbc;
  border-top: 0;
}

.attributes {
  flex: none;
  height: 201px;
  gap: 7px;
}

.attributes + .grip {
  height: 4px;
}

.attr-frame {
  display: flex;
  flex-direction: column;
  flex: 1;
  min-width: 0;
  border: 1px solid #aaa;
}

.attr-clip {
  flex: 1;
  border-left: 4px solid #f8f8f8;
  background: #e6e6e6;
  overflow: hidden;
}

.grid {
  width: 100%;
  border-spacing: 0;
  table-layout: fixed;
}

.attributes .grid {
  width: 895px;
}

.w160 {
  width: 160px;
}

.w130 {
  width: 130px;
}

.w85 {
  width: 85px;
}

.w70 {
  width: 70px;
}

.grid th {
  height: 22px;
  padding: 0 0 0 2px;
  border-right: 1px solid #bcbcbc;
  background: #f5f5f5;
  font-weight: 700;
}

.grid td {
  height: 30px;
  padding: 0 0 2px 3px;
  border: solid #bcbcbc;
  border-width: 0 1px 1px 0;
  white-space: nowrap;
}

.grid .alt td {
  background: #d0d7dd;
}

.grid .selected td {
  background: #b0ceea;
}

.grid .cut td {
  height: 23px;
  padding-bottom: 8px;
  line-height: 14px;
}

.grid .na {
  color: #808080;
}

.attr-thumb {
  flex: none;
  width: calc(100% - 58px);
}

.attr-actions {
  display: flex;
  flex-direction: column;
  flex: none;
  width: 91px;
  margin-top: 4px;
  padding: 10px;
  gap: 6px;
}

.attr-actions .btn {
  width: 67px;
}

.parameters {
  flex: 1;
  min-height: 0;
  padding-bottom: 0;
  border-bottom: 0;
}

.param-frame {
  display: flex;
  flex: none;
  width: 515px;
  border: 1px solid #aaa;
  border-bottom: 0;
  overflow: hidden;
}

.param-clip {
  flex: 1;
  border-left: 4px solid #f8f8f8;
  background: #e6e6e6;
  overflow: hidden;
}

.vscroll {
  display: flex;
  flex-direction: column;
  flex: none;
  width: 16px;
}

.vscroll i {
  height: 128px;
  margin: 27px 0 auto;
  background: #bcbcbc;
}

.vgrip {
  align-self: center;
  height: 17px;
  margin: 0 1px;
  border-left: 1px dotted #aaa;
}

.param-form {
  display: flex;
  flex-direction: column;
  flex: 1;
  margin-top: 4px;
  padding: 20px 15px 0 14px;
  border-color: #e4e4e4;
  background: #f5f5f5;
  gap: 6px;
}

.slider {
  width: 100%;
  height: 20px;
  margin-bottom: 8px;
  appearance: none;
}

.slider::-webkit-slider-runnable-track {
  height: 3px;
  background: #2196f3;
}

.slider::-webkit-slider-thumb {
  width: 15px;
  height: 15px;
  margin-top: -6px;
  border-radius: 50%;
  background: #2196f3;
  appearance: none;
}

.form-row {
  display: flex;
  align-items: center;
  height: 22px;
  gap: 6px;
}

.form-row label {
  flex: none;
  width: 33px;
  white-space: nowrap;
}

.form-row input {
  flex: 1;
  min-width: 0;
  height: 22px;
  padding: 0 0 1px 2px;
  border: 1px solid #777;
}

.form-row button {
  display: grid;
  place-items: center;
  width: 21px;
  height: 21px;
  background: #fff;
}

.down, .up {
  border: 4px solid transparent;
}

.down {
  border-top-color: #666;
  border-bottom: 0;
}

.up {
  border-bottom-color: #666;
  border-top: 0;
}

.units .select {
  width: 126px;
}

.units label {
  width: 32px;
}

.units .select::after {
  border-top-color: #000;
}

.units select {
  border-color: #777;
  color: #222;
}

/* tutorial call-outs */
.mark {
  position: absolute;
  border: 5px solid #ed1c24;
  pointer-events: none;
}

.step {
  position: absolute;
  color: #ed1c24;
  font-size: 34px;
  font-weight: 700;
  line-height: 36px;
}

.mark-1 {
  top: 347px;
  left: 15px;
  width: 103px;
  height: 31px;
}

.step-1 {
  top: 381px;
  left: 131px;
}

.mark-2 {
  top: 227px;
  left: 6px;
  width: 139px;
  height: 35px;
}

.step-2 {
  top: 238px;
  left: 163px;
}

.note {
  position: absolute;
  top: 282px;
  left: 17px;
  width: 249px;
  height: 63px;
  background: #fff;
  color: #ed1c24;
  font-size: 23px;
  font-weight: 700;
  line-height: 33px;
  white-space: nowrap;
}

.mark-3 {
  top: 60px;
  left: 5px;
  width: 250px;
  height: 36px;
}

.step-3 {
  top: 95px;
  left: 270px;
}

.mark-4 {
  top: 164px;
  left: 3px;
  width: 431px;
  height: 46px;
}

.step-4 {
  top: 140px;
  left: 451px;
}

.mark-5 {
  top: 17px;
  right: -2px;
  left: 526px;
  height: 80px;
}
</style>
